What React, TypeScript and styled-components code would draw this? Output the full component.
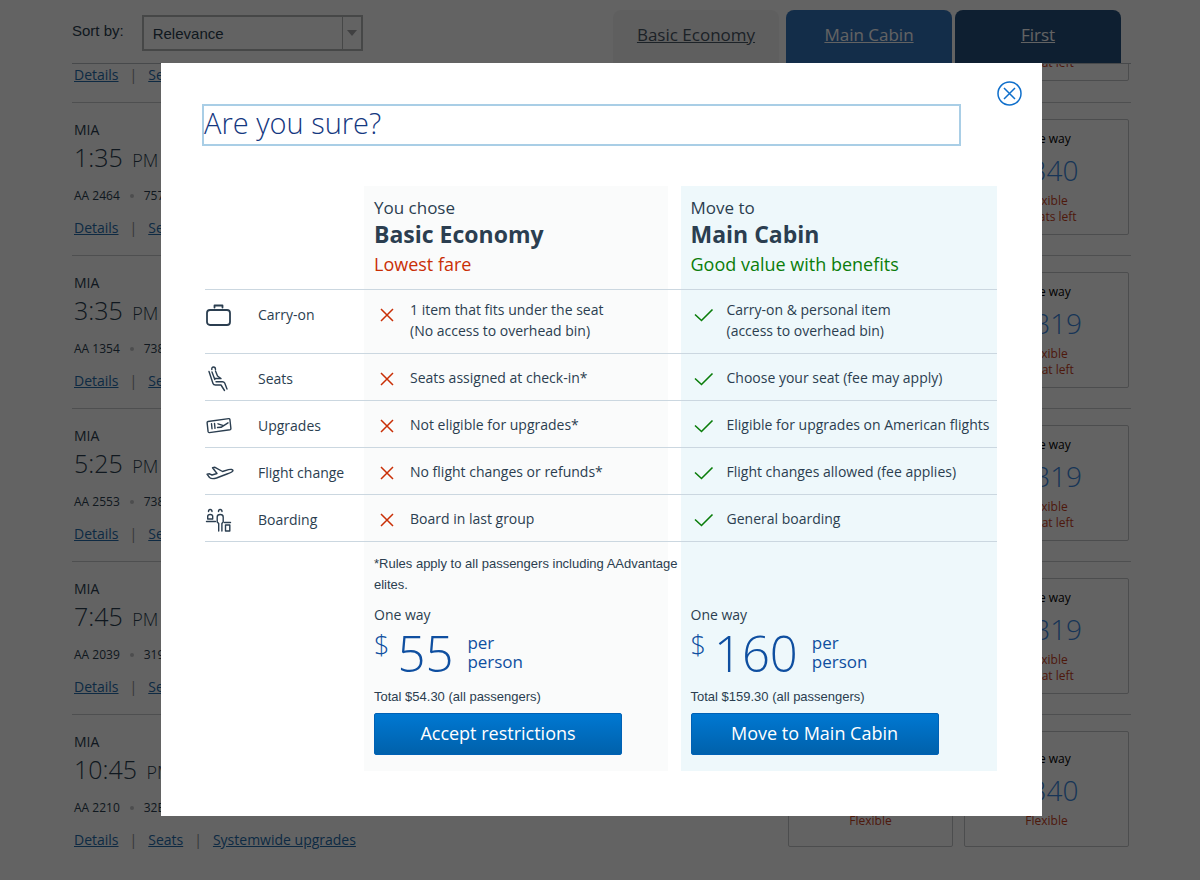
import React from 'react';
import styled, { createGlobalStyle } from 'styled-components';

const GlobalStyle = createGlobalStyle`
  *, *::before, *::after { box-sizing: border-box; }
  body {
    margin: 0;
    background: #fff;
    color: #2b3e50;
    font-family: "Open Sans", "Noto Sans", sans-serif;
    font-size: 14px;
    line-height: 21px;
  }
  h1, h2, p { margin: 0; }
`;

const Page = styled.main`
  min-height: 100vh;
  padding: 0 69px 0 72px;
  overflow: hidden;
`;

const ResultsHeader = styled.header`
  display: flex;
  align-items: flex-start;
  justify-content: space-between;
  height: 64px;
  padding: 10px 10px 0 0;
  border-bottom: 1px solid #b8bcc0;
`;

const Sort = styled.div`
  display: flex;
  align-items: center;
  gap: 18px;
  padding-top: 5px;
  font-family: "Liberation Sans", Arial, sans-serif;
  font-size: 15px;
`;

const SortLabel = styled.label`
  padding-bottom: 6px;
`;

const SelectBox = styled.div`
  position: relative;
  width: 221px;
  height: 36px;
  border: 2px solid #b4b6b8;
`;

const Select = styled.select`
  width: 100%;
  height: 100%;
  padding: 0 28px 0 9px;
  border: 0;
  appearance: none;
  background: transparent;
  color: inherit;
  font: inherit;
`;

const SelectArrow = styled.span`
  position: absolute;
  top: 0;
  right: 0;
  bottom: 0;
  display: flex;
  align-items: center;
  justify-content: center;
  width: 19px;
  border-left: 1px solid #b4b6b8;
  pointer-events: none;
  &::after {
    content: "";
    border: 5px solid transparent;
    border-top: 6px solid #a4a6a8;
    border-bottom: 0;
  }
`;

const Tabs = styled.nav`
  display: flex;
  gap: 3px;
`;

const Tab = styled.a<{ $tone: 'basic' | 'main' | 'first' }>`
  width: 166px;
  height: 53px;
  margin-right: ${(p) => (p.$tone === 'basic' ? '4px' : '0')};
  border-radius: 8px 8px 0 0;
  background: ${(p) => ({ basic: '#f5f5f5', main: '#3374bd', first: '#24507f' })[p.$tone]};
  color: ${(p) => (p.$tone === 'basic' ? '#4a5866' : '#fff')};
  font-size: 17px;
  line-height: 50px;
  text-align: center;
`;

const FlightRow = styled.article<{ $scrolled?: boolean }>`
  display: flex;
  justify-content: space-between;
  align-items: ${(p) => (p.$scrolled ? 'flex-end' : 'flex-start')};
  height: ${(p) => (p.$scrolled ? '39px' : '153px')};
  padding: ${(p) => (p.$scrolled ? '0 2px 16px' : '16px 2px')};
  border-bottom: 1px solid #c8cbce;
  overflow: hidden;
  &:last-of-type { border-bottom: 0; }
`;

const Time = styled.p`
  font-size: 25px;
  font-weight: 300;
  line-height: 35px;
`;

const Meridiem = styled.span`
  margin-left: 3px;
  font-size: 18px;
`;

const FlightNumber = styled.p`
  display: flex;
  align-items: center;
  gap: 10px;
  padding: 7px 0 10px;
  font-size: 12px;
  line-height: 22px;
`;

const Dot = styled.span`
  width: 4px;
  height: 4px;
  border-radius: 50%;
  background: #c4c6c8;
`;

const Links = styled.p`
  display: flex;
  gap: 11px;
  color: #8c8f92;
  line-height: 22px;
`;

const TextLink = styled.a`
  color: #256dac;
`;

const Cards = styled.div`
  display: flex;
  gap: 11px;
  margin-bottom: 5px;
`;

const Card = styled.div`
  display: flex;
  flex: none;
  flex-direction: column;
  justify-content: center;
  width: 165px;
  height: 116px;
  border: 1px solid #c4c6c8;
  border-radius: 2px;
  color: #c8421e;
  font-size: 12px;
  line-height: 16px;
  text-align: center;
`;

const CardWay = styled.p`
  color: #000;
  line-height: 20px;
`;

const CardFare = styled.p`
  padding-bottom: 2px;
  color: #3c88e0;
  font-size: 28px;
  font-weight: 300;
  line-height: 42px;
`;

const Overlay = styled.div`
  position: fixed;
  inset: 0;
  padding: 63px 158px 63px 161px;
  background: rgba(0, 0, 0, 0.61);
  overflow: auto;
`;

const Dialog = styled.section`
  display: flex;
  flex-direction: column;
  padding: 18px 20px 45px 41px;
  background: #fff;
`;

const CloseButton = styled.button`
  display: flex;
  align-self: flex-end;
  width: 25px;
  height: 25px;
  padding: 0;
  border: 0;
  background: none;
`;

const Title = styled.h1`
  height: 42px;
  margin: -2px 61px 40px 0;
  border: 2px solid #a9cee6;
  color: #14387f;
  font-size: 29px;
  font-weight: 350;
  line-height: 34px;
  outline: none;
`;

const Compare = styled.table`
  width: calc(100% - 28px);
  margin-left: 3px;
  border-spacing: 0;
  table-layout: fixed;
  thead > tr > *, tbody > tr:not(:last-child) > * { border-bottom: 1px solid #cbd7e0; }
`;

const LabelCol = styled.col` width: 159px; `;
const CabinCol = styled.col` width: 40%; `;

const Blank = styled.td`
  padding: 0;
`;

const tint = (main?: boolean) =>
  main ? '#eef8fb' : 'linear-gradient(to left, #fff 13px, #fafbfb 13px)';

const HeadCell = styled.th<{ $main?: boolean }>`
  height: 104px;
  padding: 11px 0 0 10px;
  background: ${(p) => tint(p.$main)};
  font-weight: 400;
  text-align: left;
  vertical-align: top;
`;

const Lead = styled.p`
  font-size: 17px;
  line-height: 22px;
`;

const Cabin = styled.p`
  font-size: 23px;
  font-weight: 700;
  line-height: 31px;
`;

const Tagline = styled.p<{ $main?: boolean }>`
  color: ${(p) => (p.$main ? '#0a7d0a' : '#c92f06')};
  font-size: 18px;
  line-height: 28px;
`;

const LabelCell = styled.th`
  height: 47px;
  padding: 14px 0 0;
  font-weight: 400;
  text-align: left;
  vertical-align: top;
`;

const LabelInner = styled.span`
  display: flex;
  align-items: center;
  gap: 23px;
  height: 20px;
`;

const FeatureCell = styled.td<{ $main?: boolean }>`
  padding: 0;
  background: ${(p) => tint(p.$main)};
  vertical-align: top;
`;

const Feature = styled.div`
  display: flex;
  align-items: flex-start;
  gap: 13px;
  padding: 14px 0 0 13px;
  svg { flex: none; }
`;

const FeatureText = styled.span<{ $tall?: boolean }>`
  margin: ${(p) => (p.$tall ? '-5px 0 12px' : '-1px 0 0')};
  white-space: pre-line;
`;

const FareCell = styled.td<{ $main?: boolean }>`
  padding: 11px 0 16px 10px;
  background: ${(p) => tint(p.$main)};
  vertical-align: bottom;
`;

const Note = styled.p`
  margin-bottom: 9px;
  font-family: "Liberation Sans", Arial, sans-serif;
  font-size: 13px;
`;

const Fare = styled.div`
  display: flex;
  align-items: flex-start;
  height: 61px;
  color: #0f4fa0;
`;

const Currency = styled.span`
  margin-right: 8px;
  font-size: 27px;
  font-weight: 350;
  line-height: 40px;
`;

const Amount = styled.span`
  margin-right: 14px;
  font-size: 49px;
  font-weight: 300;
  line-height: 56px;
`;

const Per = styled.span`
  padding-top: 8px;
  font-size: 17px;
  line-height: 19px;
`;

const Total = styled.p`
  margin-bottom: 5px;
  font-family: "Liberation Sans", Arial, sans-serif;
  font-size: 13px;
  line-height: 22px;
`;

const ActionButton = styled.button`
  display: block;
  width: 248px;
  height: 42px;
  padding: 0 0 3px;
  border: 1px solid #0061b5;
  border-radius: 2px;
  background: linear-gradient(#0078d2, #0061ab);
  color: #fff;
  font-family: inherit;
  font-size: 18px;
`;

const IconSvg = styled.svg`
  flex: none;
  width: 30px;
  height: 30px;
  fill: none;
  stroke: #2b3e50;
  stroke-width: 1.4;
  stroke-linecap: round;
  stroke-linejoin: round;
`;

const Icon = ({ children }: { children: React.ReactNode }) => (
  <IconSvg viewBox="0 0 30 30" aria-hidden="true">{children}</IconSvg>
);

const BagIcon = () => (
  <Icon>
    <rect x="2" y="11" width="23" height="15" rx="3" strokeWidth="1.8" />
    <path d="M9.5 8.5V6.500H17.500V8.500" strokeWidth="1.8" />
  </Icon>
);

const SeatIcon = () => (
  <Icon>
    <path d="M4 8.500L8 20.500Q8.500 22 10.500 22H16L19.500 27.500" />
    <path d="M11 18.700H17.500Q19 18.700 19.700 20L22 26" />
    <path d="M6.800 6.500Q6.600 4 8.500 4Q10.500 4 10.500 6.500" />
    <path d="M7 9L9.800 16.500M10.500 8L12.500 13L16 15.500H10" />
  </Icon>
);

const TicketIcon = () => (
  <Icon>
    <path d="M3 11.500L23.700 8.600Q24.700 8.500 24.900 9.500L25.900 18.500Q26 19.500 25 19.700L4.300 22.600Q3.300 22.700 3.100 21.700L2.100 12.700Q2 11.700 3 11.500Z" />
    <path d="M6.500 13.800L7 18.800M9.500 13.400L10 18.400M12.500 17.500L16 17.300L23 12.800M13 13.800L18.500 15.600" />
  </Icon>
);

const PlaneIcon = () => (
  <Icon>
    <path d="M2 17.200L4.500 16.800L7 18L12 16.500L7.500 10.800L10 10.300L17.500 14.500L23.500 12.600C26 12 28 12.500 28 13.500C28 15 25 16 22 17L11.500 21C8.500 22 6 21.800 4.500 20.500Z" />
  </Icon>
);

const BoardingIcon = () => (
  <Icon>
    <path d="M3.500 7.500Q3.500 5.500 5.200 5.500T7 7.500" />
    <path d="M2.700 15V12.500Q2.700 10.500 5.200 10.500T7.700 12.500V15ZM1.500 17.500H10.500" />
    <path d="M13.500 7.500Q13.500 5.500 15.200 5.500T17 7.500" />
    <path d="M13.700 27V19.500L12.200 18V13Q12.200 10.500 15.200 10.500T18.200 13V18L16.900 19.500V27" />
    <path d="M19.500 18.500H25.500M20.500 21H24.800V27H20.500Z" />
  </Icon>
);

const CrossMark = () => (
  <svg width="20" height="21" viewBox="0 0 20 21" stroke="#c92f06" strokeWidth="1.5" fill="none" role="img" aria-label="Restricted">
    <path d="M4 5L16 17M16 5L4 17" />
  </svg>
);

const CheckMark = () => (
  <svg width="20" height="21" viewBox="0 0 20 21" stroke="#0a7d0a" strokeWidth="1.6" fill="none" role="img" aria-label="Included">
    <path d="M1 10.500L7.500 16.500L18.500 5.500" />
  </svg>
);

const FEATURES = [
  { label: 'Carry-on', icon: <BagIcon />, basic: '1 item that fits under the seat\n(No access to overhead bin)', main: 'Carry-on & personal item\n(access to overhead bin)', tall: true },
  { label: 'Seats', icon: <SeatIcon />, basic: 'Seats assigned at check-in*', main: 'Choose your seat (fee may apply)' },
  { label: 'Upgrades', icon: <TicketIcon />, basic: 'Not eligible for upgrades*', main: 'Eligible for upgrades on American flights' },
  { label: 'Flight change', icon: <PlaneIcon />, basic: 'No flight changes or refunds*', main: 'Flight changes allowed (fee applies)' },
  { label: 'Boarding', icon: <BoardingIcon />, basic: 'Board in last group', main: 'General boarding' },
];

const FLIGHTS = [
  { time: '1:35', number: 'AA 2464', plane: '757', fare: '$340', seats: '2 seats left' },
  { time: '3:35', number: 'AA 1354', plane: '738-', fare: '$ 319', seats: '1 seat left' },
  { time: '5:25', number: 'AA 2553', plane: '738-', fare: '$ 319', seats: '1 seat left' },
  { time: '7:45', number: 'AA 2039', plane: '319', fare: '$ 319', seats: '1 seat left' },
  { time: '10:45', number: 'AA 2210', plane: '32B', fare: '$340', seats: '' },
];

const FlightLinks = () => (
  <Links>
    <TextLink href="#details">Details</TextLink>|
    <TextLink href="#seats">Seats</TextLink>|
    <TextLink href="#upgrades">Systemwide upgrades</TextLink>
  </Links>
);

const FareCards = ({ fare, seats }: { fare: string; seats: string }) => (
  <Cards>
    {['main', 'first'].map((cabin) => (
      <Card key={cabin}>
        <CardWay>One way</CardWay>
        <CardFare>{fare}</CardFare>
        <p>Flexible</p>
        {seats && <p>{seats}</p>}
      </Card>
    ))}
  </Cards>
);

const FareSummary = ({ amount, total, action }: { amount: string; total: string; action: string }) => (
  <>
    <p>One way</p>
    <Fare>
      <Currency>$</Currency>
      <Amount>{amount}</Amount>
      <Per>per<br />person</Per>
    </Fare>
    <Total>Total {total} (all passengers)</Total>
    <ActionButton type="button">{action}</ActionButton>
  </>
);

export default function App() {
  return (
    <>
      <GlobalStyle />
      <Page>
        <ResultsHeader>
          <Sort>
            <SortLabel htmlFor="sort">Sort by:</SortLabel>
            <SelectBox>
              <Select id="sort" defaultValue="Relevance">
                <option>Relevance</option>
              </Select>
              <SelectArrow />
            </SelectBox>
          </Sort>
          <Tabs aria-label="Cabins">
            <Tab $tone="basic" href="#basic">Basic Economy</Tab>
            <Tab $tone="main" href="#main">Main Cabin</Tab>
            <Tab $tone="first" href="#first">First</Tab>
          </Tabs>
        </ResultsHeader>
        <FlightRow $scrolled>
          <FlightLinks />
          <FareCards fare="$ 319" seats="1 seat left" />
        </FlightRow>
        {FLIGHTS.map((f) => (
          <FlightRow key={f.time}>
            <div>
              <p>MIA</p>
              <Time>{f.time} <Meridiem>PM</Meridiem></Time>
              <FlightNumber>{f.number}<Dot />{f.plane}</FlightNumber>
              <FlightLinks />
            </div>
            <FareCards fare={f.fare} seats={f.seats} />
          </FlightRow>
        ))}
      </Page>

      <Overlay>
        <Dialog role="dialog" aria-modal="true" aria-labelledby="dialog-title">
          <CloseButton type="button" aria-label="Close">
            <svg width="25" height="25" viewBox="0 0 25 25" fill="none" stroke="#0f6fcb" strokeWidth="1.5">
              <circle cx="12.5" cy="12.5" r="11.5" />
              <path d="M7 7L18 18M18 7L7 18" />
            </svg>
          </CloseButton>
          <Title id="dialog-title" tabIndex={-1}>Are you sure?</Title>
          <Compare>
            <colgroup>
              <LabelCol />
              <CabinCol />
              <CabinCol />
            </colgroup>
            <thead>
              <tr>
                <Blank />
                <HeadCell scope="col">
                  <Lead>You chose</Lead>
                  <Cabin>Basic Economy</Cabin>
                  <Tagline>Lowest fare</Tagline>
                </HeadCell>
                <HeadCell scope="col" $main>
                  <Lead>Move to</Lead>
                  <Cabin>Main Cabin</Cabin>
                  <Tagline $main>Good value with benefits</Tagline>
                </HeadCell>
              </tr>
            </thead>
            <tbody>
              {FEATURES.map((f) => (
                <tr key={f.label}>
                  <LabelCell scope="row">
                    <LabelInner>{f.icon}{f.label}</LabelInner>
                  </LabelCell>
                  <FeatureCell>
                    <Feature><CrossMark /><FeatureText $tall={f.tall}>{f.basic}</FeatureText></Feature>
                  </FeatureCell>
                  <FeatureCell $main>
                    <Feature><CheckMark /><FeatureText $tall={f.tall}>{f.main}</FeatureText></Feature>
                  </FeatureCell>
                </tr>
              ))}
              <tr>
                <Blank />
                <FareCell>
                  <Note>*Rules apply to all passengers including AAdvantage<br />elites.</Note>
                  <FareSummary amount="55" total="$54.30" action="Accept restrictions" />
                </FareCell>
                <FareCell $main>
                  <FareSummary amount="160" total="$159.30" action="Move to Main Cabin" />
                </FareCell>
              </tr>
            </tbody>
          </Compare>
        </Dialog>
      </Overlay>
    </>
  );
}
